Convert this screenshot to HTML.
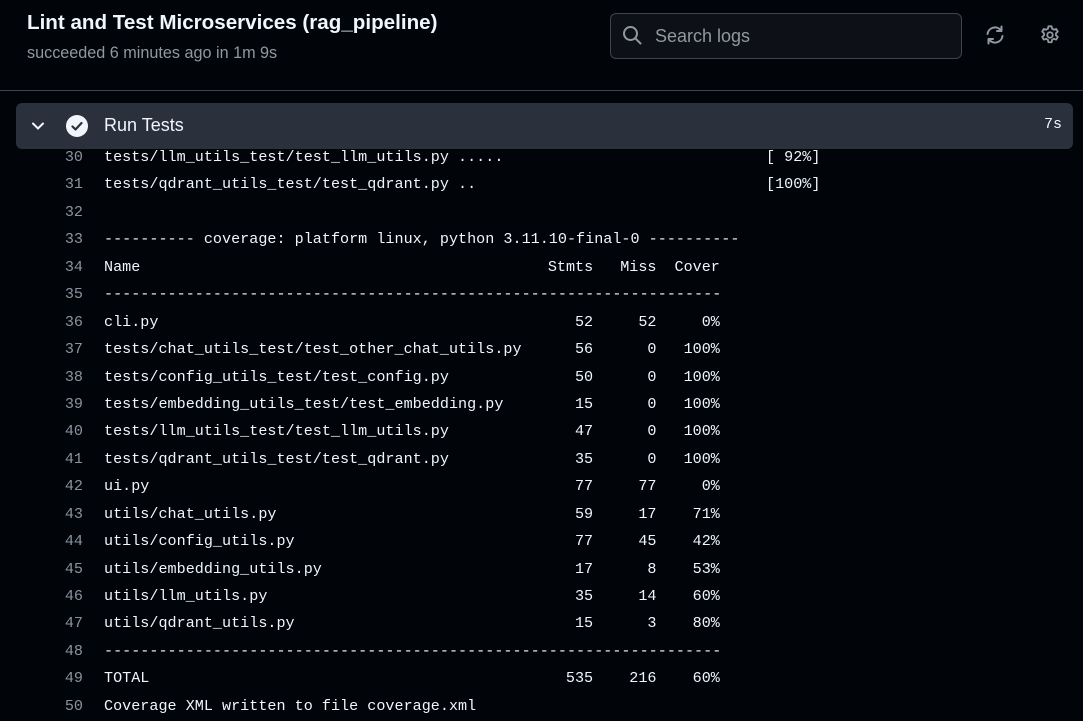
<!DOCTYPE html>
<html><head><meta charset="utf-8"><style>
body{margin:0;width:1083px;height:721px;background:#010409;overflow:hidden;font-family:"Liberation Sans",sans-serif;position:relative}
.t{position:absolute;left:27px;top:11px;font-size:20.6px;font-weight:bold;color:#f0f6fc}
.s{position:absolute;left:27px;top:44px;font-size:16.2px;color:#9198a1}
.hr{position:absolute;left:0;right:0;top:90px;height:1px;background:#3d444d}
.sb{position:absolute;left:610px;top:13px;width:352px;height:46px;border:1px solid #3d444d;border-radius:6px;background:#0d1117;box-sizing:border-box}
.sb span{position:absolute;left:44px;top:12px;font-size:18px;color:#9198a1}
.bar{position:absolute;left:16px;top:103px;width:1057px;height:46px;background:#2a313c;border-radius:6px}
.bar .n{position:absolute;left:88px;top:12px;font-size:18px;color:#f0f6fc}
.bar .d{position:absolute;right:11px;top:13px;font-family:"Liberation Mono",monospace;font-size:15px;color:#f0f6fc}
.log{position:absolute;left:0;top:144px;font-family:"Liberation Mono",monospace;font-size:15.1px;color:#f0f6fc;letter-spacing:0.02px}
.l{position:relative;height:27.45px;line-height:27.45px;white-space:pre}
.l .ln{position:absolute;left:40px;width:43px;text-align:right;color:#8b949e}
.l .c{position:absolute;left:104px}
.r{display:inline-block;text-align:right}
</style></head><body>
<div class="t">Lint and Test Microservices (rag_pipeline)</div>
<div class="s">succeeded 6 minutes ago in 1m 9s</div>
<div class="sb"><svg style="position:absolute;left:11px;top:11px" width="20" height="20" viewBox="0 0 20 20" fill="none" stroke="#9198a1" stroke-width="2"><circle cx="8.5" cy="8.5" r="6.5"/><path d="M13.3 13.3L18.5 18.5" stroke-linecap="round"/></svg><span>Search logs</span></div>
<svg style="position:absolute;left:984px;top:24px" width="22" height="22" viewBox="0 0 22 22" fill="none" stroke="#9198a1" stroke-width="2" stroke-linecap="round" stroke-linejoin="round"><path d="M3.5 10A7.5 7.5 0 0 1 17 6.5"/><path d="M17.5 2.5V7H13"/><path d="M18.5 12A7.5 7.5 0 0 1 5 15.5"/><path d="M4.5 19.5V15H9"/></svg>
<svg style="position:absolute;left:1039px;top:24px" width="22" height="22" viewBox="0 0 24 24" fill="none" stroke="#9198a1" stroke-width="2"><circle cx="12" cy="12" r="3"/><path d="M10.3 2.5h3.4l.6 2.6 1.9 1.1 2.6-.8 1.7 2.9-2 1.8v2.2l2 1.8-1.7 2.9-2.6-.8-1.9 1.1-.6 2.6h-3.4l-.6-2.6-1.9-1.1-2.6.8-1.7-2.9 2-1.8v-2.2l-2-1.8 1.7-2.9 2.6.8 1.9-1.1z" stroke-linejoin="round"/></svg>
<div class="hr"></div>
<div class="bar">
<svg style="position:absolute;left:15px;top:16px" width="14" height="14" viewBox="0 0 14 14" fill="none" stroke="#f0f6fc" stroke-width="2" stroke-linecap="round"><path d="M2 4.5l5 5 5-5"/></svg>
<svg style="position:absolute;left:49px;top:11px" width="24" height="24" viewBox="0 0 24 24"><circle cx="12" cy="12" r="11" fill="#f0f6fc"/><path d="M7.5 12.5l3 3 6-6.5" fill="none" stroke="#2a313c" stroke-width="2.2" stroke-linecap="round" stroke-linejoin="round"/></svg>
<span class="n">Run Tests</span><span class="d">7s</span></div>
<div class="log">
<div class="l"><span class="ln">30</span><span class="c">tests/llm_utils_test/test_llm_utils.py .....</span><span class="c" style="left:766px">[ 92%]</span></div>
<div class="l"><span class="ln">31</span><span class="c">tests/qdrant_utils_test/test_qdrant.py ..</span><span class="c" style="left:766px">[100%]</span></div>
<div class="l"><span class="ln">32</span></div>
<div class="l"><span class="ln">33</span><span class="c">---------- coverage: platform linux, python 3.11.10-final-0 ----------</span></div>
<div class="l"><span class="ln">34</span><span class="c"><span class="r" style="width:49ch;text-align:left">Name</span><span class="r" style="width:5ch">Stmts</span><span class="r" style="width:7ch">Miss</span><span class="r" style="width:7ch">Cover</span></span></div>
<div class="l"><span class="ln">35</span><span class="c">--------------------------------------------------------------------</span></div>
<div class="l"><span class="ln">36</span><span class="c"><span class="r" style="width:49ch;text-align:left">cli.py</span><span class="r" style="width:5ch">52</span><span class="r" style="width:7ch">52</span><span class="r" style="width:7ch">0%</span></span></div>
<div class="l"><span class="ln">37</span><span class="c"><span class="r" style="width:49ch;text-align:left">tests/chat_utils_test/test_other_chat_utils.py</span><span class="r" style="width:5ch">56</span><span class="r" style="width:7ch">0</span><span class="r" style="width:7ch">100%</span></span></div>
<div class="l"><span class="ln">38</span><span class="c"><span class="r" style="width:49ch;text-align:left">tests/config_utils_test/test_config.py</span><span class="r" style="width:5ch">50</span><span class="r" style="width:7ch">0</span><span class="r" style="width:7ch">100%</span></span></div>
<div class="l"><span class="ln">39</span><span class="c"><span class="r" style="width:49ch;text-align:left">tests/embedding_utils_test/test_embedding.py</span><span class="r" style="width:5ch">15</span><span class="r" style="width:7ch">0</span><span class="r" style="width:7ch">100%</span></span></div>
<div class="l"><span class="ln">40</span><span class="c"><span class="r" style="width:49ch;text-align:left">tests/llm_utils_test/test_llm_utils.py</span><span class="r" style="width:5ch">47</span><span class="r" style="width:7ch">0</span><span class="r" style="width:7ch">100%</span></span></div>
<div class="l"><span class="ln">41</span><span class="c"><span class="r" style="width:49ch;text-align:left">tests/qdrant_utils_test/test_qdrant.py</span><span class="r" style="width:5ch">35</span><span class="r" style="width:7ch">0</span><span class="r" style="width:7ch">100%</span></span></div>
<div class="l"><span class="ln">42</span><span class="c"><span class="r" style="width:49ch;text-align:left">ui.py</span><span class="r" style="width:5ch">77</span><span class="r" style="width:7ch">77</span><span class="r" style="width:7ch">0%</span></span></div>
<div class="l"><span class="ln">43</span><span class="c"><span class="r" style="width:49ch;text-align:left">utils/chat_utils.py</span><span class="r" style="width:5ch">59</span><span class="r" style="width:7ch">17</span><span class="r" style="width:7ch">71%</span></span></div>
<div class="l"><span class="ln">44</span><span class="c"><span class="r" style="width:49ch;text-align:left">utils/config_utils.py</span><span class="r" style="width:5ch">77</span><span class="r" style="width:7ch">45</span><span class="r" style="width:7ch">42%</span></span></div>
<div class="l"><span class="ln">45</span><span class="c"><span class="r" style="width:49ch;text-align:left">utils/embedding_utils.py</span><span class="r" style="width:5ch">17</span><span class="r" style="width:7ch">8</span><span class="r" style="width:7ch">53%</span></span></div>
<div class="l"><span class="ln">46</span><span class="c"><span class="r" style="width:49ch;text-align:left">utils/llm_utils.py</span><span class="r" style="width:5ch">35</span><span class="r" style="width:7ch">14</span><span class="r" style="width:7ch">60%</span></span></div>
<div class="l"><span class="ln">47</span><span class="c"><span class="r" style="width:49ch;text-align:left">utils/qdrant_utils.py</span><span class="r" style="width:5ch">15</span><span class="r" style="width:7ch">3</span><span class="r" style="width:7ch">80%</span></span></div>
<div class="l"><span class="ln">48</span><span class="c">--------------------------------------------------------------------</span></div>
<div class="l"><span class="ln">49</span><span class="c"><span class="r" style="width:49ch;text-align:left">TOTAL</span><span class="r" style="width:5ch">535</span><span class="r" style="width:7ch">216</span><span class="r" style="width:7ch">60%</span></span></div>
<div class="l"><span class="ln">50</span><span class="c">Coverage XML written to file coverage.xml</span></div>
</div>
</body></html>
